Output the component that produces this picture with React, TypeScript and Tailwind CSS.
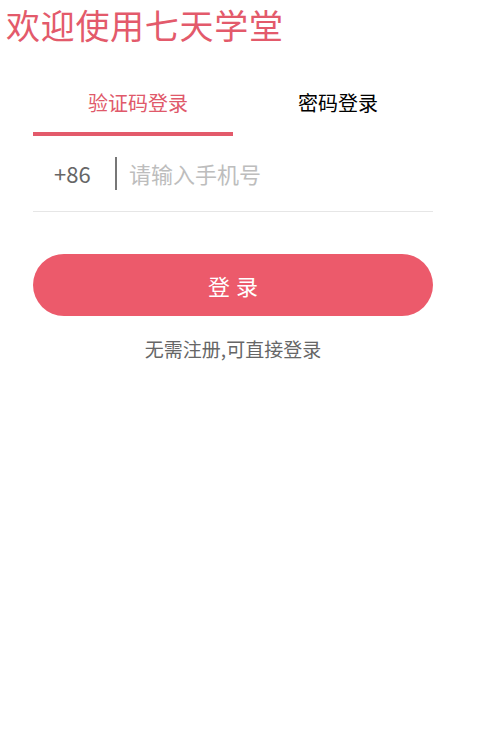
import React, { useState } from "react";

export default function App() {
  const [tab, setTab] = useState(0);

  return (
    <div
      className="w-[495px] min-h-[739px] bg-white"
      style={{ fontFamily: '"Noto Sans CJK SC", "Noto Sans", sans-serif' }}
    >
      <h1 className="pl-[6px] pt-[2px] text-[34px] leading-[46px] text-[#e35a6b] tracking-[0.7px]">
        欢迎使用七天学堂
      </h1>

      <div className="ml-[33px] w-[400px] pt-[40px]">
        {/* tabs */}
        <div className="flex">
          {["验证码登录", "密码登录"].map((t, i) => (
            <button
              key={t}
              onClick={() => setTab(i)}
              className="w-[200px] flex flex-col items-center"
            >
              <span
                className={`pl-[10px] text-[20px] leading-[30px] ${
                  tab === i ? "text-[#e0596a]" : "text-black"
                }`}
              >
                {t}
              </span>
              <span
                className={`mt-[14px] h-[4px] w-full ${
                  tab === i ? "bg-[#e35a6b]" : "bg-transparent"
                }`}
              />
            </button>
          ))}
        </div>

        {/* phone input */}
        <div className="flex items-center h-[76px] border-b border-[#e6e6e6]">
          <span className="ml-[21px] w-[40px] text-[22px] text-[#666]">+86</span>
          <span className="ml-[21px] w-[2px] h-[33px] bg-[#777]" />
          <input
            className="ml-[12px] min-w-0 flex-1 text-[22px] text-[#333] outline-none placeholder:text-[#bdbdbd]"
            placeholder="请输入手机号"
          />
        </div>

        <button className="mt-[42px] w-[400px] h-[62px] rounded-full bg-[#ec5a6b] text-white text-[22px] tracking-[6px] pl-[6px]">
          登录
        </button>

        <p className="mt-[19px] text-center text-[19px] text-[#666]">
          无需注册,可直接登录
        </p>
      </div>
    </div>
  );
}
